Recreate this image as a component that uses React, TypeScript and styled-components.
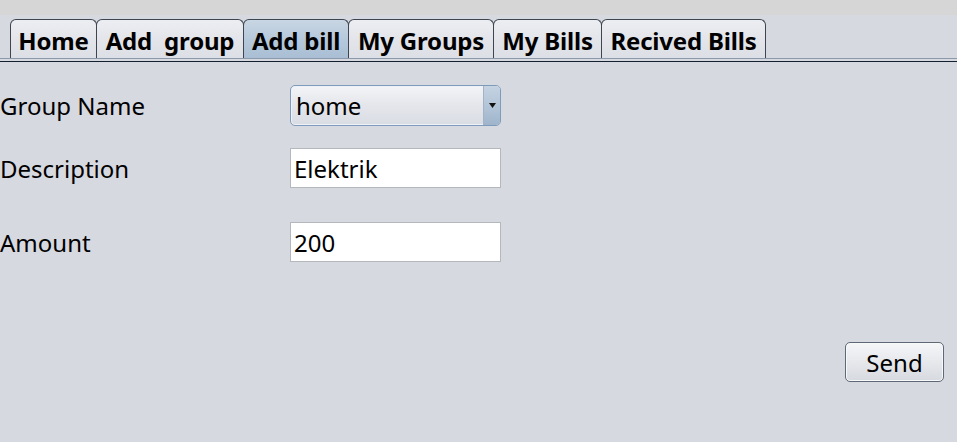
import React from "react";
import styled, { createGlobalStyle } from "styled-components";

const Global = createGlobalStyle`
  html, body { margin: 0; padding: 0; }
  body {
    background: #d6d9df;
    font-family: "Noto Sans", "Open Sans", sans-serif;
    color: #000;
    width: 957px;
    height: 442px;
    overflow: hidden;
  }
`;

const Window = styled.div`
  width: 957px;
  height: 442px;
  display: flex;
  flex-direction: column;
  background: #d6d9df;
`;

const TopBand = styled.div`
  height: 15px;
  background: #d6d6d6;
`;

const TabBar = styled.div`
  display: flex;
  padding: 4px 0 0 10px;
  height: 39px;
  border-bottom: 1px solid #8c99ab;
`;

const Tab = styled.div<{ $active?: boolean; $width: number }>`
  box-sizing: border-box;
  height: 39px;
  width: ${(p) => p.$width}px;
  display: flex;
  align-items: center;
  justify-content: center;
  padding-top: 2px;
  font-weight: 700;
  font-size: 24px;
  letter-spacing: -0.2px;
  white-space: pre;
  border: 1px solid #3d4550;
  border-bottom: none;
  border-radius: 6px 6px 0 0;
  margin-right: -1px;
  background: ${(p) =>
    p.$active
      ? "linear-gradient(#c9d6e3 0%, #b8cadc 45%, #a9bed4 100%)"
      : "linear-gradient(#eceef2 0%, #e3e5ea 50%, #dcdfe5 100%)"};
`;

const Separator = styled.div`
  height: 2px;
  background: #d6d9df;
  border-bottom: 1px solid #14202f;
`;

const Form = styled.div`
  display: grid;
  grid-template-columns: 290px 211px;
  grid-auto-rows: auto;
  padding-top: 23px;
  row-gap: 0;
`;

const Label = styled.div<{ $h: number; $mb: number }>`
  height: ${(p) => p.$h}px;
  margin-bottom: ${(p) => p.$mb}px;
  display: flex;
  align-items: center;
  font-size: 24px;
  padding-left: 0;
`;

const Combo = styled.div`
  box-sizing: border-box;
  height: 41px;
  width: 211px;
  margin-bottom: 22px;
  border: 1px solid #7f9bbb;
  border-radius: 5px;
  display: flex;
  overflow: hidden;
  box-shadow: inset 0 0 0 1px #eef1f6;
  background: linear-gradient(#f3f4f7 0%, #e4e6eb 50%, #d9dce3 100%);
`;

const ComboText = styled.div`
  flex: 1;
  display: flex;
  align-items: center;
  padding-left: 5px;
  font-size: 24px;
`;

const ComboArrow = styled.div`
  width: 16px;
  border-left: 1px solid #a3b3c6;
  display: flex;
  align-items: center;
  justify-content: center;
  background: linear-gradient(#c5d3e2 0%, #afc2d6 60%, #9fb4cb 100%);
`;

const Field = styled.div<{ $mb: number }>`
  box-sizing: border-box;
  height: 40px;
  width: 211px;
  margin-bottom: ${(p) => p.$mb}px;
  background: #fff;
  border: 1px solid #b4b7bc;
  display: flex;
  align-items: center;
  padding-left: 3px;
  font-size: 24px;
`;

const Footer = styled.div`
  display: flex;
  justify-content: flex-end;
  padding: 80px 13px 0 0;
`;

const Button = styled.div`
  box-sizing: border-box;
  width: 99px;
  height: 40px;
  border: 1px solid #5f6875;
  border-radius: 5px;
  display: flex;
  align-items: center;
  justify-content: center;
  font-size: 24px;
  background: linear-gradient(#f5f6f8 0%, #e6e8ec 50%, #d6d9df 100%);
  box-shadow: inset 0 0 0 1px #f7f8fa;
`;

const tabs: { label: string; width: number; active?: boolean }[] = [
  { label: "Home", width: 87 },
  { label: "Add  group", width: 148 },
  { label: "Add bill", width: 106, active: true },
  { label: "My Groups", width: 146 },
  { label: "My Bills", width: 109 },
  { label: "Recived Bills", width: 165 },
];

export default function App() {
  return (
    <Window>
      <Global />
      <TopBand />
      <TabBar>
        {tabs.map((t) => (
          <Tab key={t.label} $active={t.active} $width={t.width}>
            {t.label}
          </Tab>
        ))}
      </TabBar>
      <Separator />
      <Form>
        <Label $h={41} $mb={22}>Group Name</Label>
        <Combo>
          <ComboText>home</ComboText>
          <ComboArrow>
            <svg width="7" height="5" viewBox="0 0 7 5">
              <path d="M0 0 L7 0 L3.5 5 Z" fill="#111" />
            </svg>
          </ComboArrow>
        </Combo>
        <Label $h={40} $mb={34}>Description</Label>
        <Field $mb={34}>Elektrik</Field>
        <Label $h={40} $mb={0}>Amount</Label>
        <Field $mb={0}>200</Field>
      </Form>
      <Footer>
        <Button>Send</Button>
      </Footer>
    </Window>
  );
}
